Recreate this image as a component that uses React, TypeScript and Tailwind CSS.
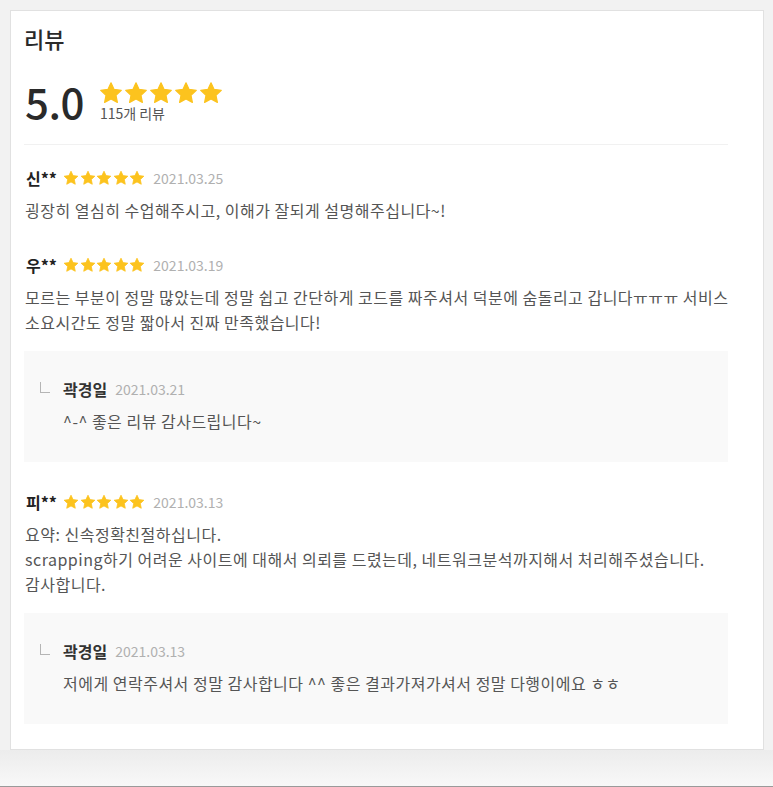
import React from 'react';

type Reply = { name: string; date: string; text: string };
type Review = { name: string; date: string; lines: string[]; reply?: Reply };

const reviews: Review[] = [
  {
    name: '신**',
    date: '2021.03.25',
    lines: ['굉장히 열심히 수업해주시고, 이해가 잘되게 설명해주십니다~!'],
  },
  {
    name: '우**',
    date: '2021.03.19',
    lines: [
      '모르는 부분이 정말 많았는데 정말 쉽고 간단하게 코드를 짜주셔서 덕분에 숨돌리고 갑니다ㅠㅠㅠ 서비스',
      '소요시간도 정말 짧아서 진짜 만족했습니다!',
    ],
    reply: { name: '곽경일', date: '2021.03.21', text: '^-^ 좋은 리뷰 감사드립니다~' },
  },
  {
    name: '피**',
    date: '2021.03.13',
    lines: [
      '요약: 신속정확친절하십니다.',
      'scrapping하기 어려운 사이트에 대해서 의뢰를 드렸는데, 네트워크분석까지해서 처리해주셨습니다.',
      '감사합니다.',
    ],
    reply: {
      name: '곽경일',
      date: '2021.03.13',
      text: '저에게 연락주셔서 정말 감사합니다 ^^ 좋은 결과가져가셔서 정말 다행이에요 ㅎㅎ',
    },
  },
];

function Star({ className }: { className: string }) {
  return (
    <svg viewBox="0 0 24 24" className={className}>
      <path
        d="M12 1.8l3.1 6.6 7.2.9-5.3 5 1.4 7.1L12 17.9l-6.4 3.5 1.4-7.1-5.3-5 7.2-.9z"
        fill="#fcc31e"
        stroke="#fcc31e"
        strokeWidth="1.2"
        strokeLinejoin="round"
      />
    </svg>
  );
}

function Stars({ size }: { size: 'lg' | 'sm' }) {
  return (
    <div className={size === 'lg' ? 'flex gap-[1px]' : 'flex gap-[0.6px]'}>
      {[0, 1, 2, 3, 4].map((i) => (
        <Star key={i} className={size === 'lg' ? 'w-[24px] h-[24px]' : 'w-[16px] h-[16px]'} />
      ))}
    </div>
  );
}

function ReplyBox({ reply }: { reply: Reply }) {
  return (
    <div className="mt-[16px] bg-[#f9f9f9] pl-[16px] pt-[26px] pb-[28px]">
      <div className="flex items-center h-[24px]">
        <div className="w-[10px] h-[11px] border-l border-b border-[#b5b5b5] -mt-[4px]" />
        <span className="ml-[13px] text-[16px] font-bold text-[#333]">{reply.name}</span>
        <span className="ml-[8px] text-[14px] text-[#b0b0b0]">{reply.date}</span>
      </div>
      <p className="mt-[8px] pl-[23px] text-[16px] leading-[25px] tracking-[0.5px] text-[#555] whitespace-nowrap">
        {reply.text}
      </p>
    </div>
  );
}

export default function App() {
  return (
    <div
      className="flex flex-col h-[787px] bg-[#f2f2f2]"
      style={{ fontFamily: '"Noto Sans CJK KR", "Noto Sans", sans-serif' }}
    >
      <div className="ml-[10px] mt-[10px] w-[754px] bg-white border border-[#e1e1e1] pl-[13px] pt-[13px] pb-[25px]">
        <div className="w-[704px]">
          <h2 className="text-[22px] leading-[28px] font-medium text-[#2a2a2a]">리뷰</h2>

          <div className="flex items-start mt-[26px]">
            <span className="text-[42px] leading-[46px] font-medium text-[#2a2a2a] tracking-[-0.5px] pl-[1px]">5.0</span>
            <div className="ml-[15px] mt-[3px] flex flex-col">
              <Stars size="lg" />
              <span className="text-[14px] leading-[18px] -mt-[1px] pl-[1px] text-[#555]">115개 리뷰</span>
            </div>
          </div>

          <div className="mt-[20px] h-px bg-[#f1f1f1]" />

          <div className="pt-[21px] flex flex-col">
            {reviews.map((r, idx) => (
              <div
                key={r.name + r.date}
                className={idx === 0 ? '' : reviews[idx - 1].reply ? 'mt-[28px]' : 'mt-[30px]'}
              >
                <div className="flex items-center h-[24px]">
                  <span className="text-[16px] font-bold text-[#222] pl-[2px]">{r.name}</span>
                  <div className="ml-[6px]">
                    <Stars size="sm" />
                  </div>
                  <span className="ml-[8px] text-[14px] text-[#b0b0b0]">{r.date}</span>
                </div>
                <div className="mt-[8px] text-[16px] leading-[25px] tracking-[0.5px] text-[#555] pl-[1px]">
                  {r.lines.map((l, i) => (
                    <div key={i} className="whitespace-nowrap">{l}</div>
                  ))}
                </div>
                {r.reply && <ReplyBox reply={r.reply} />}
              </div>
            ))}
          </div>
        </div>
      </div>
      <div className="flex-1 bg-gradient-to-b from-[#ececec] to-[#f8f8f8] border-b border-[#9a9a9a]" />
    </div>
  );
}
